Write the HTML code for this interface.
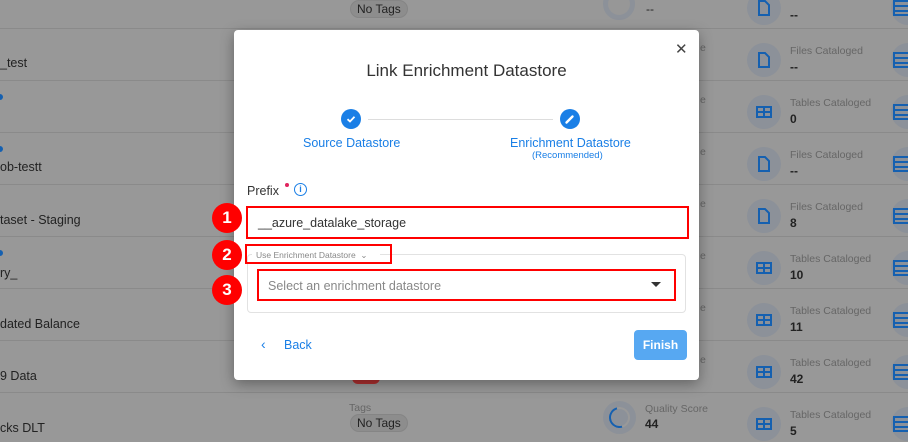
<!DOCTYPE html>
<html><head><style>
*{box-sizing:border-box;margin:0;padding:0}
body{width:908px;height:442px;overflow:hidden;background:#989898;font-family:"Liberation Sans",sans-serif;position:relative}
.a{position:absolute}
.sep{position:absolute;left:0;width:908px;height:1px;background:#8a8a8a}
.lt{position:absolute;font-size:12.5px;color:#222}
.ic{position:absolute;width:34px;height:34px;border-radius:50%;background:#8c9199}
.lbl{position:absolute;font-size:10.5px;color:#666}
.val{position:absolute;font-size:12px;color:#222;font-weight:bold}
.tag{position:absolute;background:#8d8d8d;border:1px solid #858585;border-radius:9px;font-size:12px;color:#222;padding:1px 6px}
.modal{position:absolute;left:234px;top:30px;width:465px;height:350px;background:#fff;border-radius:4px;box-shadow:0 4px 14px rgba(0,0,0,.35)}
.red{position:absolute;border:2px solid #f00}
.num{position:absolute;width:30px;height:30px;border-radius:50%;background:#f00;color:#fff;font-weight:bold;font-size:17px;text-align:center;line-height:30px}
.blue{color:#1a7fe6}
</style></head><body>
<div class="sep" style="top:28px"></div>
<div class="sep" style="top:80px"></div>
<div class="sep" style="top:132px"></div>
<div class="sep" style="top:184px"></div>
<div class="sep" style="top:236px"></div>
<div class="sep" style="top:288px"></div>
<div class="sep" style="top:340px"></div>
<div class="sep" style="top:392px"></div>
<div class="lt" style="left:0;top:56px">_test</div>
<div class="a" style="left:-3px;top:94px;width:6px;height:6px;border-radius:50%;background:#1560b0"></div>
<div class="a" style="left:-3px;top:146px;width:6px;height:6px;border-radius:50%;background:#1560b0"></div>
<div class="lt" style="left:0;top:160px">ob-testt</div>
<div class="lt" style="left:0;top:213px">taset - Staging</div>
<div class="a" style="left:-3px;top:250px;width:6px;height:6px;border-radius:50%;background:#1560b0"></div>
<div class="lt" style="left:0;top:266px">ry_</div>
<div class="lt" style="left:0;top:317px">dated Balance</div>
<div class="lt" style="left:0;top:369px">9 Data</div>
<div class="lt" style="left:0;top:421px">cks DLT</div>

<div class="tag" style="left:350px;top:0px;font-size:12px">No Tags</div>
<div class="a" style="left:603px;top:-12px;width:32px;height:32px;border-radius:50%;border:5px solid #8c9199;background:#979797"></div>
<div class="val" style="left:646px;top:2px;font-weight:normal">--</div>
<div class="a" style="left:352px;top:378px;width:28px;height:6px;background:#b03030;border-radius:0 0 6px 6px"></div>
<div class="lbl" style="left:349px;top:402px">Tags</div>
<div class="tag" style="left:350px;top:414px">No Tags</div>
<div class="a" style="left:603px;top:401px;width:33px;height:33px;border-radius:50%;background:#8c9199"></div>
<div class="a" style="left:609px;top:407px;width:21px;height:21px;border-radius:50%;border:2px solid #999;border-left-color:#1560b0;border-top-color:#1560b0;transform:rotate(-60deg)"></div>
<div class="lbl" style="left:645px;top:403px">Quality Score</div>
<div class="val" style="left:645px;top:417px">44</div>

<div id="rc"></div>
<script>
var rows=[[-22,'f','','--',''],[30,'f','Files Cataloged','--','e'],[82,'t','Tables Cataloged','0','e'],[134,'f','Files Cataloged','--','e'],[186,'f','Files Cataloged','8','e'],[238,'t','Tables Cataloged','10','e'],[290,'t','Tables Cataloged','11','e'],[342,'t','Tables Cataloged','42','e'],[394,'t','Tables Cataloged','5','']];
var h='';
rows.forEach(function(r){var y=r[0];
h+='<div class="ic" style="left:747px;top:'+(y+13)+'px"></div>';
if(r[1]=='f')h+='<svg class="a" style="left:756px;top:'+(y+21)+'px" width="16" height="18" viewBox="0 0 16 18"><path d="M3 2h6l4 4v10H3z" fill="none" stroke="#1560b0" stroke-width="2"/></svg>';
else h+='<svg class="a" style="left:756px;top:'+(y+24)+'px" width="16" height="12" viewBox="0 0 16 12"><rect x="1" y="1" width="14" height="10" fill="none" stroke="#1560b0" stroke-width="2"/><path d="M1 6h14M8 1v10" stroke="#1560b0" stroke-width="2"/></svg>';
if(r[2])h+='<div class="lbl" style="left:790px;top:'+(y+15)+'px">'+r[2]+'</div>';
h+='<div class="val" style="left:790px;top:'+(y+30)+'px">'+r[3]+'</div>';
h+='<div class="ic" style="left:891px;top:'+(y+13)+'px"></div><svg class="a" style="left:892px;top:'+(y+22)+'px" width="16" height="16" viewBox="0 0 16 16"><path d="M16 1H2v14h14M2 6h14M2 11h14" fill="none" stroke="#1560b0" stroke-width="2"/></svg>';
if(r[4])h+='<div class="lbl" style="left:700px;top:'+(y+12)+'px">'+r[4]+'</div>';
});
document.getElementById('rc').innerHTML=h;
</script>

<div class="modal">
<div class="a" style="left:441px;top:10px;font-size:15px;color:#444">✕</div>
<div class="a" style="left:0;width:465px;top:31px;text-align:center;font-size:17px;color:#333">Link Enrichment Datastore</div>
<div class="a" style="left:107px;top:79px;width:20px;height:20px;border-radius:50%;background:#1a7fe6"></div>
<svg class="a" style="left:111px;top:83px" width="12" height="12" viewBox="0 0 12 12"><path d="M2.5 6.2l2.5 2.3 4.5-4.8" fill="none" stroke="#fff" stroke-width="1.8"/></svg>
<div class="a" style="left:134px;top:89px;width:185px;height:1px;background:#ddd"></div>
<div class="a" style="left:326px;top:79px;width:20px;height:20px;border-radius:50%;background:#1a7fe6"></div>
<svg class="a" style="left:330px;top:83px" width="12" height="12" viewBox="0 0 12 12"><path d="M2.5 9.5l6-6" stroke="#fff" stroke-width="2.4" stroke-linecap="round"/></svg>
<div class="a blue" style="left:69px;top:106px;font-size:12.5px">Source Datastore</div>
<div class="a blue" style="left:276px;top:106px;font-size:12.5px">Enrichment Datastore</div>
<div class="a blue" style="left:298px;top:120px;font-size:9.5px">(Recommended)</div>
<div class="a" style="left:13px;top:154px;font-size:12.5px;color:#333">Prefix</div>
<div class="a" style="left:51px;top:153px;width:4px;height:4px;border-radius:50%;background:#e0245e"></div>
<div class="a" style="left:60px;top:153px;width:13px;height:13px;border-radius:50%;border:1.3px solid #1a7fe6;color:#1a7fe6;font-size:9px;text-align:center;line-height:11px;font-weight:bold">i</div>
<div class="a" style="left:13px;top:224px;width:439px;height:59px;border:1px solid #e2e2e2;border-radius:4px"></div>
<div class="a" style="left:18px;top:219px;width:128px;height:10px;background:#fff"></div>
<div class="a" style="left:22px;top:220px;font-size:8.5px;color:#888">Use Enrichment Datastore &nbsp;⌄</div>
<div class="a" style="left:34px;top:249px;font-size:12.5px;color:#888">Select an enrichment datastore</div>
<div class="a" style="left:417px;top:252px;width:0;height:0;border-left:5px solid transparent;border-right:5px solid transparent;border-top:5px solid #333"></div>
<div class="a" style="left:24px;top:186px;font-size:12.5px;color:#333">__azure_datalake_storage</div>
<div class="a blue" style="left:27px;top:306px;font-size:14px">‹</div>
<div class="a blue" style="left:50px;top:308px;font-size:12.5px">Back</div>
<div class="a" style="left:400px;top:300px;width:53px;height:30px;border-radius:4px;background:#57a8f2;color:#fff;font-weight:bold;font-size:12px;text-align:center;line-height:30px">Finish</div>
</div>

<div class="red" style="left:246px;top:206px;width:443px;height:33px"></div>
<div class="red" style="left:245px;top:244px;width:147px;height:20px"></div>
<div class="red" style="left:257px;top:269px;width:419px;height:32px"></div>
<div class="num" style="left:212px;top:203px">1</div>
<div class="num" style="left:212px;top:240px">2</div>
<div class="num" style="left:212px;top:275px">3</div>
</body></html>
